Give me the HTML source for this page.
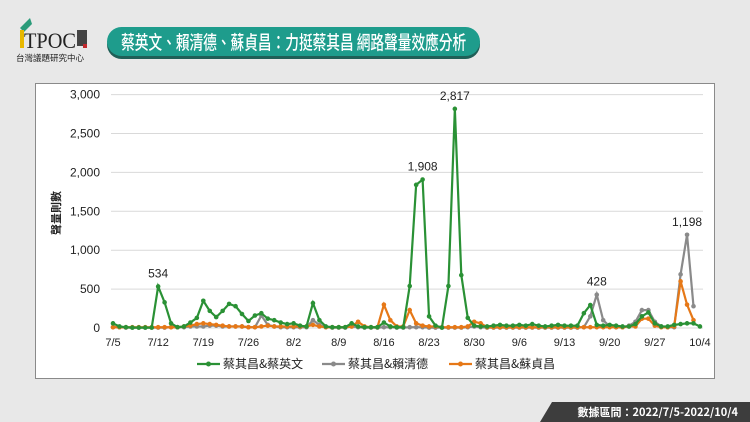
<!DOCTYPE html>
<html><head><meta charset="utf-8">
<style>
body{margin:0;width:750px;height:422px;background:#e8e8e8;overflow:hidden;position:relative;font-family:"Liberation Sans","Noto Sans CJK TC",sans-serif}
.box{position:absolute;left:35px;top:83px;width:678px;height:294px;background:#fff;border:1px solid #8a8a8a}
.pill{position:absolute;left:107px;top:27px;width:373px;height:29px;background:#1e9c8c;border-radius:15px;box-shadow:0 3px 0 #1f5f57;color:#fff;line-height:29px;text-align:center;white-space:nowrap;overflow:hidden}
.pill span{display:inline-block;font-size:19px;font-family:"Noto Sans CJK TC",sans-serif;font-weight:500;transform:scaleX(0.72);transform-origin:center;margin:0 -70px}
.foot{position:absolute;left:540px;top:402px;width:210px;height:20px;background:#3d3d3d;clip-path:polygon(12px 0,100% 0,100% 100%,0 100%);color:#fff;font-size:11px;font-weight:bold;line-height:20px;text-align:right;padding-right:12px;box-sizing:border-box;font-family:"Noto Sans CJK TC",sans-serif}
</style></head><body>
<div class="pill"><span>蔡英文、賴清德、蘇貞昌：力挺蔡其昌 網路聲量效應分析</span></div>
<svg style="position:absolute;left:14px;top:14px" width="75" height="50">
<polygon points="6,14 16,4 18,10 10,18" fill="#2b9b7a"/>
<rect x="6" y="16" width="4" height="18" fill="#e8b800"/>
<text x="10" y="34" font-family="Liberation Serif" font-size="22" fill="#222" textLength="52" lengthAdjust="spacingAndGlyphs">TPOC</text>
<rect x="63" y="16" width="10" height="16" fill="#444"/><rect x="69" y="30" width="4" height="4" fill="#c0282d"/>
<text x="2" y="47" font-family="Noto Sans CJK TC" font-size="8.5" fill="#222">台灣議題研究中心</text>
</svg>
<div class="box"></div>
<svg id="c" style="position:absolute;left:0;top:0" width="750" height="422"></svg>
<div class="foot">數據區間：2022/7/5-2022/10/4</div>
<script>
var g=[60,20,10,5,5,5,5,534,330,60,10,20,70,130,350,220,140,220,310,280,180,90,160,190,120,100,70,50,60,30,20,320,100,20,10,10,10,60,20,10,10,10,70,20,10,10,540,1840,1908,150,30,5,540,2817,680,130,30,20,20,30,40,30,30,40,30,50,30,20,30,40,30,30,30,190,295,40,30,40,30,20,20,50,150,200,60,20,20,40,50,60,60,20];
var gr=[10,10,5,5,5,5,5,5,5,10,10,10,20,20,20,30,30,20,20,20,20,10,10,160,40,20,10,10,10,10,10,100,40,10,5,5,5,20,10,5,5,5,10,10,5,5,10,10,10,5,5,5,5,5,5,10,20,10,5,5,5,5,5,5,5,5,5,5,5,5,5,5,5,10,150,428,100,20,10,10,30,80,230,230,80,20,10,10,690,1198,280];
var o=[10,10,10,10,10,10,10,10,10,10,10,20,30,50,60,50,40,30,20,20,20,10,10,20,30,20,20,20,20,20,20,40,20,10,10,10,10,20,80,20,10,10,300,100,20,20,230,60,30,20,20,10,10,10,10,20,80,60,10,10,10,10,10,10,10,10,10,10,10,10,10,10,10,10,10,10,10,10,10,10,20,20,120,120,30,10,10,20,600,300,100];
var X=function(i){return 113+i*6.45},Y=function(v){return 328-v*0.0778};
var s='';
for(var k=0;k<=6;k++){var y=Y(k*500);s+='<line x1="111" x2="703" y1="'+y+'" y2="'+y+'" stroke="#d9d9d9" stroke-width="1"/>';
s+='<text x="100" y="'+(y+4)+'" text-anchor="end" font-size="12" fill="#222">'+(k==0?'0':(k*500).toLocaleString('en-US'))+'</text>';}
var labs=['7/5','7/12','7/19','7/26','8/2','8/9','8/16','8/23','8/30','9/6','9/13','9/20','9/27','10/4'];
labs.forEach(function(l,j){var i=j==13?91:j*7;s+='<text x="'+X(i)+'" y="346" text-anchor="middle" font-size="11" fill="#222">'+l+'</text>';});
function ser(d,c){var p=d.map(function(v,i){return X(i)+','+Y(v)}).join(' ');var r='<polyline points="'+p+'" fill="none" stroke="'+c+'" stroke-width="2.2"/>';d.forEach(function(v,i){r+='<circle cx="'+X(i)+'" cy="'+Y(v)+'" r="2.3" fill="'+c+'"/>';});return r;}
s+=ser(gr,'#8a8a8a')+ser(o,'#e67817')+ser(g,'#2a9135');
[[7,534],[48,1908],[53,2817],[75,428],[89,1198]].forEach(function(a){s+='<text x="'+X(a[0])+'" y="'+(Y(a[1])-9)+'" text-anchor="middle" font-size="12" fill="#222">'+a[1].toLocaleString('en-US')+'</text>';});
s+='<text transform="translate(60,213) rotate(-90)" text-anchor="middle" font-size="11" font-weight="bold" fill="#222" font-family="Noto Sans CJK TC">聲量則數</text>';
[[197,'#2a9135','蔡其昌&蔡英文'],[322,'#8a8a8a','蔡其昌&賴清德'],[449,'#e67817','蔡其昌&蘇貞昌']].forEach(function(a){s+='<line x1="'+a[0]+'" x2="'+(a[0]+23)+'" y1="364" y2="364" stroke="'+a[1]+'" stroke-width="2.2"/><circle cx="'+(a[0]+11.5)+'" cy="364" r="2.5" fill="'+a[1]+'"/><text x="'+(a[0]+26)+'" y="368" font-size="12" fill="#222" font-family="Noto Sans CJK TC">'+a[2].replace('&','&amp;')+'</text>';});
document.getElementById('c').innerHTML=s;
</script>
</body></html>
